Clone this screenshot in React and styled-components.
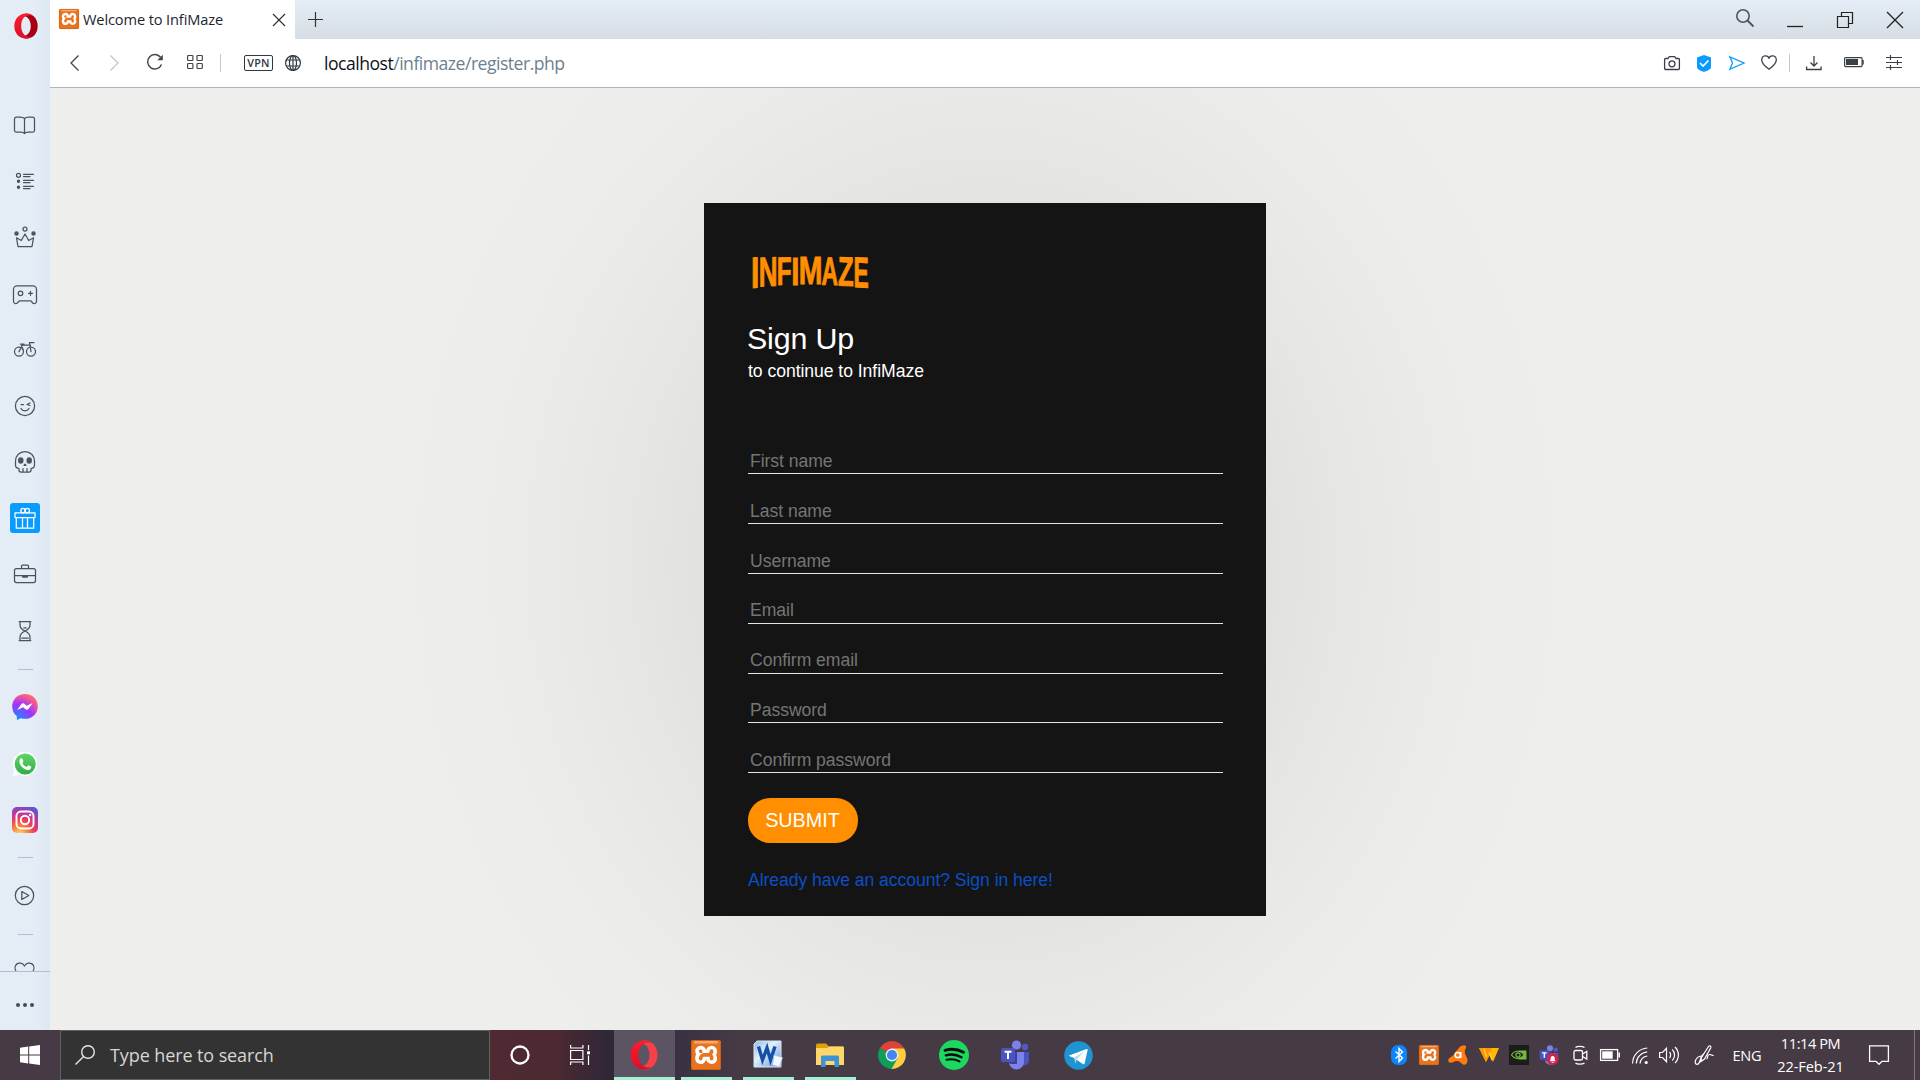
import React from "react";
import styled, { createGlobalStyle } from "styled-components";
import { SiXampp } from "react-icons/si";

const Global = createGlobalStyle`
  * { box-sizing: border-box; }
  html, body { margin: 0; padding: 0; overflow: hidden; background: #eeeeec; }
`;

const UI = `"Open Sans", "Noto Sans", sans-serif`;
const ARIAL = `"Liberation Sans", Arial, sans-serif`;

/* ---------- shell ---------- */
const Desktop = styled.div`
  width: 1920px;
  height: 1080px;
  display: flex;
  flex-direction: column;
  overflow: hidden;
  font-family: ${UI};
`;
const Browser = styled.div`
  display: flex;
  height: 1030px;
`;
const Window = styled.div`
  flex: 1;
  display: flex;
  flex-direction: column;
  min-width: 0;
`;
const Glyph = styled.svg`
  display: block;
  flex: none;
  width: ${(p) => p.$w || 20}px;
  height: ${(p) => p.$h || p.$w || 20}px;
  margin-left: ${(p) => p.$ml || 0}px;
  margin-top: ${(p) => p.$mt || 0}px;
  fill: ${(p) => p.$fill || "none"};
  stroke: ${(p) => p.$c || "none"};
  stroke-width: ${(p) => p.$sw || 1.3};
  overflow: visible;
`;

/* ---------- sidebar ---------- */
const Side = styled.aside`
  width: 50px;
  display: flex;
  flex-direction: column;
  background: linear-gradient(90deg, #e4edf5 0, #e4edf5 36px, #e0eaf3 42px, #dde8f2 50px);
`;
const SideList = styled.div`
  height: 971px;
  overflow: hidden;
  display: flex;
  flex-direction: column;
  align-items: center;
`;
const SideLogo = styled.div`
  height: 98px;
  flex: none;
  padding: 13px 0 0 1px;
`;
const SideItem = styled.div`
  flex: none;
  width: 50px;
  height: ${(p) => p.$h || 56}px;
  display: flex;
  align-items: center;
  justify-content: center;
`;
const Active = styled.div`
  width: 30px;
  height: 30px;
  border-radius: 3px;
  background: #0a9bff;
  display: flex;
`;
const SideRule = styled.div`
  flex: none;
  width: 15px;
  height: 1px;
  background: #b0bfcd;
  margin: ${(p) => p.$m};
`;
const SideFoot = styled.div`
  height: 59px;
  border-top: 1px solid #b0bfcd;
  display: flex;
  align-items: center;
  justify-content: center;
  gap: 3px;
  padding-top: 7px;
`;
const Dot = styled.i`
  width: 4px;
  height: 4px;
  border-radius: 50%;
  background: #454c56;
`;

/* ---------- tab strip and address bar ---------- */
const TabStrip = styled.div`
  height: 39px;
  display: flex;
  align-items: center;
  background: linear-gradient(#e4edf5, #d6dde5);
`;
const Tab = styled.div`
  width: 245px;
  height: 39px;
  background: #fff;
  border-radius: 2px 2px 0 0;
  display: flex;
  align-items: center;
  padding-left: 9px;
`;
const TabTitle = styled.span`
  width: 189px;
  margin-left: 4px;
  padding-bottom: 2px;
  font-size: 14.6px;
  line-height: 20px;
  letter-spacing: -0.12px;
  color: #1c2530;
  white-space: nowrap;
`;
const Spacer = styled.div`
  flex: 1;
`;
const EndPad = styled.div`
  width: ${(p) => p.$w}px;
`;
const AddressBar = styled.div`
  height: 49px;
  display: flex;
  align-items: center;
  background: #fff;
  border-bottom: 1px solid #a9b7c4;
`;
const Divider = styled.div`
  width: 1px;
  height: 18px;
  background: #c8c8c8;
  margin-left: ${(p) => p.$ml}px;
`;
const Vpn = styled.div`
  width: 29px;
  height: 16px;
  margin-left: 23px;
  border: 1px solid #2f3844;
  border-radius: 2px;
  font-size: 10.8px;
  line-height: 14px;
  text-align: center;
  letter-spacing: 0.2px;
  color: #2f3844;
  font-weight: 600;
`;
const Url = styled.div`
  margin-left: 23px;
  padding-bottom: 1px;
  font-size: 17.6px;
  line-height: 24px;
  letter-spacing: -0.5px;
  color: #6c7f8f;
  white-space: nowrap;
`;
const Host = styled.span`
  color: #0d1116;
`;

/* ---------- page ---------- */
const Page = styled.main`
  flex: 1;
  overflow: hidden;
  background:
    radial-gradient(
      ellipse 610px 695px at 935px 472px,
      rgba(0, 0, 0, 0.053) 0,
      rgba(0, 0, 0, 0.053) 46%,
      rgba(0, 0, 0, 0.036) 58%,
      rgba(0, 0, 0, 0.02) 70%,
      rgba(0, 0, 0, 0.009) 82%,
      rgba(0, 0, 0, 0.004) 91%,
      rgba(0, 0, 0, 0) 100%
    ),
    #eeeeec;
  display: flex;
  justify-content: center;
  align-items: flex-start;
  padding-top: 115px;
`;
const Card = styled.section`
  width: 562px;
  height: 713px;
  background: #141414;
  padding: 50px 43px 0 44px;
  font-family: ${ARIAL};
  color: #fff;
`;
const Logo = styled.svg`
  display: block;
  width: 124px;
  height: 38px;
  overflow: visible;
  fill: #ff8e00;
  stroke: #ff8e00;
  font-family: ${ARIAL};
  font-weight: 700;
  font-size: 40px;
`;
const Title = styled.h1`
  margin: 26px 0 0 -1px;
  font-size: 30.4px;
  font-weight: 400;
  line-height: 42px;
  letter-spacing: -0.15px;
`;
const Subtitle = styled.p`
  margin: 1px 0 0;
  font-size: 17.6px;
  line-height: 22px;
  letter-spacing: -0.05px;
`;
const Form = styled.form`
  margin-top: 62.5px;
  display: flex;
  flex-direction: column;
  align-items: flex-start;
`;
const Field = styled.input`
  width: 475px;
  height: 29.83px;
  margin: 0 0 20px;
  padding: 5px 2px 0;
  border: 0;
  border-bottom: 1px solid #e6e6e6;
  background: transparent;
  color: #fff;
  font: 17.6px ${ARIAL};
  letter-spacing: -0.05px;
  outline: none;
  &::placeholder { color: #757575; opacity: 1; }
`;
const Submit = styled.button`
  width: 110px;
  height: 45px;
  margin: 5px 0 0;
  padding: 0 1px 1px 0;
  border: 0;
  border-radius: 22px;
  background: #ff8e00;
  color: #fff;
  font: 19.8px ${ARIAL};
`;
const SignIn = styled.a`
  display: block;
  margin-top: 26px;
  font-size: 17.6px;
  line-height: 22px;
  letter-spacing: -0.06px;
  color: #0a4fc4;
`;

/* ---------- taskbar ---------- */
const Taskbar = styled.footer`
  height: 50px;
  display: flex;
  align-items: center;
  background: linear-gradient(90deg, #463a45 0, #463a45 60px, #4f2a33 490px, #4d2932 555px, #2f2736 608px, #3a3142 680px, #463a45 740px, #463a45 1920px);
`;
const Start = styled.div`
  width: 60px;
  padding-left: 20px;
`;
const Search = styled.div`
  width: 430px;
  height: 50px;
  display: flex;
  align-items: center;
  background: #333;
  border: 1px solid #606060;
  padding-left: 14px;
`;
const SearchText = styled.span`
  margin-left: 15px;
  font-size: 18px;
  line-height: 24px;
  letter-spacing: -0.1px;
  color: #d6d6d6;
  white-space: nowrap;
`;
const TaskButton = styled.div`
  width: ${(p) => p.$w}px;
  margin-left: ${(p) => p.$ml}px;
  height: 50px;
  display: flex;
  align-items: center;
  justify-content: center;
  background: ${(p) => (p.$focus ? "#5b5563" : "transparent")};
  border-bottom: 3px solid ${(p) => (p.$open ? "#a4f0d0" : "transparent")};
  padding: 3px ${(p) => (p.$w === 60 ? 0 : 1)}px 0 0;
`;
const Lang = styled.span`
  width: 28px;
  margin-left: 18.5px;
  font-size: 14.6px;
  letter-spacing: -0.3px;
  line-height: 20px;
  color: #fff;
`;
const Clock = styled.div`
  width: 88px;
  margin-left: 6px;
  text-align: center;
  font-size: 14.6px;
  line-height: 23px;
  letter-spacing: -0.45px;
  color: #fff;
  white-space: nowrap;
`;
const DateLine = styled.div`
  letter-spacing: -0.08px;
`;
const Peek = styled.div`
  width: 1px;
  height: 50px;
  margin-left: 25px;
  background: #81777f;
`;

/* ---------- drawings ---------- */
const OperaIcon = ({ id, ...r }) => (
  <Glyph viewBox="0 0 30 30" {...r}>
    <defs>
      <linearGradient id={id} x1="0" y1="0" x2="0" y2="1">
        <stop offset="0" stopColor="#ff1b2d" />
        <stop offset="1" stopColor="#d8102a" />
      </linearGradient>
    </defs>
    <path
      fill={r.$dark || "#f8404a"}
      d="M9.500 3.500C11 1.500 13.500 .5 15.500 .5 23.500 .5 28.500 7 28.500 15S23.500 29.500 15.500 29.500c-2 0-4.500-1-6-3C11.500 27 13 26.500 14.500 26 18.500 24.500 20.500 20 20.500 15S18.500 5.500 14.500 4C13 3.500 11.500 3 9.500 3.500z"
    />
    <path
      fill={`url(#${id})`}
      fillRule="evenodd"
      d="M15 .5C7 .5 1.500 7 1.500 15S7 29.500 15 29.500c3 0 5.500-1 7.500-2.700-2 .9-4 .9-6 .2C11.500 25.500 9.500 20.500 9.500 15S11.500 4.500 16.500 3c2-.7 4-.7 6 .2C20.500 1.500 18 .5 15 .5z"
    />
  </Glyph>
);

const XamppIcon = (p) => (
  <Glyph viewBox="0 0 30 30" {...p}>
    <rect width="30" height="30" rx="2.500" fill="#e8731f" />
    <rect x="2.500" y="2.500" width="25" height="25" rx="3" fill="#fff" />
    <SiXampp size={30} color="#e8731f" />
    <rect x="3" y="1" width="24" height="2.400" rx="1.200" fill="#f5a871" />
    <rect x=".5" y=".5" width="29" height="29" rx="2.300" fill="none" stroke="#c95c12" strokeWidth="0.8" />
  </Glyph>
);

const TeamsIcon = ({ badge, ...p }) => (
  <Glyph viewBox="0 0 30 30" {...p}>
    <circle cx="25" cy="7" r="3.300" fill="#5059c9" />
    <path d="M20 12h9v9a5 5 0 0 1-7 4z" fill="#4b53bc" />
    <circle cx="16.500" cy="5" r="4.600" fill="#7b83eb" />
    <path d="M9 12h15v10a7.500 7.500 0 0 1-15 0z" fill="#7b83eb" />
    <path d="M9 12h8v12h-7a9 9 0 0 1-1-3z" fill="#3b429e" />
    <rect x="1" y="8" width="14" height="14" rx="1.500" fill="#4b53bc" />
    <path d="M4.500 11.800h7M8 11.800V19" stroke="#fff" strokeWidth="2" />
    {badge && (
      <g>
        <circle cx="20.500" cy="21" r="9" fill="#d2234c" />
        <path d="M16 24.500c1.500-1 1-3 1.500-5a3 3 0 0 1 6 0c.5 2 0 4 1.500 5z M19 25.500h3v1.200h-3z" fill="#fff" />
      </g>
    )}
  </Glyph>
);

const S = (p) => (
  <Glyph viewBox="0 0 30 30" $w={30} $c="#4a525d" $sw={1.25} strokeLinejoin="round" strokeLinecap="round" {...p} />
);

const letters = [
  ["I", 5.1, 4.3, 0.068, 0.143, 30.4, 29.9],
  ["N", 12.4, 15.3, 0.067, 0.588, 29.2, 27.9],
  ["F", 30.4, 12.6, 0.067, 0.52, 27.6, 27],
  ["I", 45.3, 4.2, 0.068, 0.143, 26.9, 26.9],
  ["M", 52.6, 19.9, 0.067, 0.7, 26.6, 26.6],
  ["A", 73.9, 15.8, 0.016, 0.69, 26.9, 27.6],
  ["Z", 90.6, 14.4, 0.024, 0.56, 27.7, 28.9],
  ["E", 107.1, 12.8, 0.067, 0.56, 29, 30.4],
];

const Wordmark = () => (
  <Logo viewBox="0 0 124 38">
    {letters.map(([ch, x, w, lsb, ink, h0, h1], i) => {
      const sx = w / (ink * 40);
      const h = (h0 + h1) / 2;
      const sy = h / 27.52;
      const k = (h1 - h0) / w;
      return (
        <text
          key={i}
          strokeWidth="0.9"
          transform={`matrix(${sx} ${(k * sx) / 2} 0 ${sy} ${x - lsb * 40 * sx} ${4.6 + h - (k * w) / 4})`}
        >
          {ch}
        </text>
      );
    })}
  </Logo>
);

const fields = ["First name", "Last name", "Username", "Email", "Confirm email", "Password", "Confirm password"];

function Sidebar() {
  return (
    <Side>
      <SideList>
        <SideLogo>
          <OperaIcon id="opA" $w={26} $dark="#a70014" />
        </SideLogo>
        <SideItem>
          <S>
            <path d="M14.500 7.500C13.500 6.300 12 6 10 6H6.500A2 2 0 0 0 4.500 8v11.500a1.500 1.500 0 0 0 1.500 1.500h5c2 0 2.500.5 3.500 1.500 1-1 1.500-1.500 3.500-1.500h5a1.500 1.500 0 0 0 1.500-1.500V8A2 2 0 0 0 22.500 6H19c-2 0-3.500.3-4.500 1.500zM14.500 7.500v15" />
          </S>
        </SideItem>
        <SideItem>
          <S>
            <circle cx="8.500" cy="8.300" r="2" />
            <circle cx="8.500" cy="14.300" r="1.100" fill="#4a525d" />
            <circle cx="8.500" cy="20.300" r="1.100" fill="#4a525d" />
            <path d="M13.500 7.300h10M13.500 9.500h6.500M13.500 13.300h10M13.500 15.500h6.500M13.500 19.300h10M13.500 21.500h6.500" />
          </S>
        </SideItem>
        <SideItem>
          <S>
            <path d="M8 23.500 6.500 14.800 11.300 17.500 15 11l3.700 6.500 4.800-2.700L22 23.500z" />
            <circle cx="15" cy="6" r="2" />
            <circle cx="6.500" cy="10.500" r="1.600" fill="#4a525d" />
            <circle cx="23.500" cy="10.500" r="1.600" fill="#4a525d" />
          </S>
        </SideItem>
        <SideItem>
          <S>
            <path d="M7 6.800h16a3.500 3.500 0 0 1 3.500 3.500v12c0 2.500-2.500 2.800-3.800 1.700L21 21.800H9.300L7.300 24c-1.300 1.100-3.800.8-3.800-1.700v-12A3.500 3.500 0 0 1 7 6.800z" />
            <circle cx="10.500" cy="14.300" r="2.300" />
            <path d="M20.500 12.300v4M18.500 14.300h4" />
          </S>
        </SideItem>
        <SideItem>
          <S>
            <circle cx="9" cy="16.600" r="4.500" />
            <circle cx="21" cy="16.600" r="4.500" />
            <path d="M9 16.600 12.500 10h8M10.500 9.200h3.500M21 16.600 19.500 7.500h4.500M13 14.500l-1.500-4" />
          </S>
        </SideItem>
        <SideItem>
          <S>
            <circle cx="15" cy="15" r="9.600" />
            <path d="M11 17.500c1.500 3 6.500 3 8 0M11 13.500h2.500M20 12l-3 1.500 3 1" />
          </S>
        </SideItem>
        <SideItem>
          <S>
            <path d="M9 21.500c-2-.2-3.500-1-3.500-3.500v-4a9.500 9.500 0 0 1 19 0v4c0 2.500-1.500 3.300-3.500 3.500V23a2 2 0 0 1-2 2h-8a2 2 0 0 1-2-2zM13 25v-3.500M17 25v-3.500" />
            <ellipse cx="10.800" cy="13.500" rx="2.100" ry="2.600" fill="#4a525d" />
            <ellipse cx="19.200" cy="13.500" rx="2.100" ry="2.600" fill="#4a525d" />
            <path d="M14 18.300l1-1.200 1 1.200z" />
          </S>
        </SideItem>
        <SideItem>
          <Active>
            <S $c="#fff">
              <path d="M5 9.800h20v4.800H5zM6.300 14.600h17.400v10.600H6.300zM12.500 14.600v10.600M17.500 14.600v10.600" />
              <circle cx="13" cy="7.600" r="2.200" />
              <circle cx="17.300" cy="7.600" r="2.200" />
            </S>
          </Active>
        </SideItem>
        <SideItem>
          <S>
            <rect x="4.500" y="9.500" width="21" height="14" rx="2" />
            <path d="M11.500 9.500V7a1 1 0 0 1 1-1h5a1 1 0 0 1 1 1v2.500M4.500 16.500h21" />
            <path d="M12.700 16.800h4.600v1.200h-4.600z" fill="#4a525d" />
          </S>
        </SideItem>
        <SideItem>
          <S>
            <path d="M9.200 6.500h11.600M9.200 25.500h11.600M10 6.500V10c0 3.500 2.500 4.800 5 6-2.500 1.200-5 2.500-5 6v3.500M20 6.500V10c0 3.500-2.500 4.800-5 6 2.500 1.200 5 2.500 5 6v3.500M13.800 12.800h2.400M11.800 23.200h6.400" />
          </S>
        </SideItem>
        <SideRule $m="11px 0 9px" />
        <SideItem>
          <Glyph viewBox="0 0 26 26" $w={26}>
            <defs>
              <radialGradient id="msg" cx="0.2" cy="1" r="1.100">
                <stop offset="0" stopColor="#0a95ff" />
                <stop offset="0.55" stopColor="#a033ff" />
                <stop offset="0.9" stopColor="#ff5c87" />
                <stop offset="1" stopColor="#ff7061" />
              </radialGradient>
            </defs>
            <path fill="url(#msg)" d="M13 0C5.500 0 .2 5.300.2 12.500c0 4 1.700 7.300 4.500 9.500L5 26l3.800-1.800c1.300.4 2.700.6 4.200.6 7.500 0 12.800-5.300 12.800-12.400S20.500 0 13 0z" />
            <path fill="#fff" d="M5.200 16l4.200-6c.7-.9 1.800-1 2.600-.4l2.700 2.100L20.700 9l-4.200 6c-.7.900-1.800 1-2.600.4l-2.700-2.100z" />
          </Glyph>
        </SideItem>
        <SideItem>
          <Glyph viewBox="0 0 26 26" $w={26} $mt={2}>
            <defs>
              <linearGradient id="wa" x1="0" y1="0" x2="0" y2="1">
                <stop offset="0" stopColor="#60d66a" />
                <stop offset="1" stopColor="#2fae46" />
              </linearGradient>
            </defs>
            <path fill="#fbfdfc" d="M.5 25.500l1.700-6.600A12.300 12.300 0 1 1 7 23.700z" />
            <circle cx="13.200" cy="13" r="10.500" fill="url(#wa)" />
            <path fill="#fff" d="M9 7.200c.6-.2 1 0 1.300.6l1 2.300c.2.600-.8 1.500-.9 1.800.8 1.900 2.300 3.200 4.200 4 .6-.1 1.300-1.800 1.900-1.600l2.600 1.300c.4.300 0 1.900-.5 2.400-3.800 3.300-12.500-3.200-11-8.900.2-.8.900-1.600 1.400-1.900z" />
          </Glyph>
        </SideItem>
        <SideItem>
          <Glyph viewBox="0 0 26 26" $w={26} $mt={2}>
            <defs>
              <radialGradient id="ig" cx="0.3" cy="1.050" r="1.150">
                <stop offset="0" stopColor="#ffdc6c" />
                <stop offset="0.25" stopColor="#fb8a3c" />
                <stop offset="0.5" stopColor="#e8405f" />
                <stop offset="0.75" stopColor="#b838a5" />
                <stop offset="1" stopColor="#5a59d0" />
              </radialGradient>
            </defs>
            <rect width="26" height="26" rx="5" fill="url(#ig)" />
            <g fill="none" stroke="#fff" strokeWidth="1.900">
              <rect x="4.500" y="4.500" width="17" height="17" rx="4.500" />
              <circle cx="13" cy="13" r="4.200" />
            </g>
            <circle cx="18.100" cy="8" r="1.200" fill="#fff" />
          </Glyph>
        </SideItem>
        <SideRule $m="10px 0 10px" />
        <SideItem>
          <S>
            <circle cx="14.500" cy="14.500" r="9.200" />
            <path d="M11.800 10.500v8l7-4z" />
          </S>
        </SideItem>
        <SideRule $m="10px 0 10px" />
        <SideItem $h={50}>
          <S>
            <path d="M14.500 25.500 7 18C1 9.500 10.500 4.500 14.500 11 18.500 4.500 28 9.500 22 18z" />
          </S>
        </SideItem>
      </SideList>
      <SideFoot>
        <Dot />
        <Dot />
        <Dot />
      </SideFoot>
    </Side>
  );
}

function Chrome() {
  const dark = "#3b4048";
  return (
    <>
      <TabStrip>
        <Tab>
          <XamppIcon $w={20} $mt={-1} />
          <TabTitle>Welcome to InfiMaze</TabTitle>
          <Glyph viewBox="0 0 14 14" $w={14} $c="#333" $sw={1.2}>
            <path d="M1 1l12 12M13 1 1 13" />
          </Glyph>
        </Tab>
        <Glyph viewBox="0 0 15 15" $w={15} $ml={13} $c="#333" $sw={1.2} $mt={-1}>
          <path d="M7.500 0v15M0 7.500h15" />
        </Glyph>
        <Spacer />
        <Glyph viewBox="0 0 18 18" $w={18} $c="#50565d" $sw={1.6} $mt={-3}>
          <circle cx="7" cy="7" r="6.200" />
          <path d="M11.500 11.500 17.500 17.500" strokeWidth="2" />
        </Glyph>
        <Glyph viewBox="0 0 16 16" $w={16} $ml={33} $c="#222">
          <path d="M0 14.500h16" />
        </Glyph>
        <Glyph viewBox="0 0 16 16" $w={16} $ml={34} $c="#222" $sw={1.2}>
          <path d="M.5 4.500h11v11H.5zM4.500 4.500v-4h11v11h-4" />
        </Glyph>
        <Glyph viewBox="0 0 16 16" $w={16} $ml={34} $c="#222">
          <path d="M0 0l16 16M16 0 0 16" />
        </Glyph>
        <EndPad $w={17} />
      </TabStrip>
      <AddressBar>
        <Glyph viewBox="0 0 9 16" $w={9} $h={16} $ml={20} $c="#444">
          <path d="M8.500.5 1 8l7.500 7.500" />
        </Glyph>
        <Glyph viewBox="0 0 9 16" $w={9} $h={16} $ml={31} $c="#c4c4c4">
          <path d="M.5.5 8 8 .5 15.500" />
        </Glyph>
        <Glyph viewBox="0 0 16 16" $w={16} $ml={28} $c="#444" $sw={1.5} $mt={-2}>
          <path d="M14.500 10.500A7.200 7.200 0 1 1 13.500 3.300" />
          <path d="M15.800.8v5.500h-5.500z" fill="#444" stroke="none" />
        </Glyph>
        <Glyph viewBox="0 0 16 14" $w={16} $h={14} $ml={24} $c="#444" $sw={1.2} $mt={-2}>
          <rect x=".6" y=".5" width="5.300" height="5" rx=".8" />
          <rect x="10" y=".5" width="5.300" height="5" rx=".8" />
          <rect x=".6" y="8.500" width="5.300" height="5" rx=".8" />
          <rect x="10" y="8.500" width="5.300" height="5" rx=".8" />
        </Glyph>
        <Divider $ml={17} />
        <Vpn>VPN</Vpn>
        <Glyph viewBox="0 0 16 16" $w={16} $ml={12} $c="#2f3844" $sw={1.2}>
          <circle cx="8" cy="8" r="7.400" />
          <ellipse cx="8" cy="8" rx="3.500" ry="7.400" />
          <path d="M8 .5v15M1.300 5h13.400M1.300 11h13.400" />
        </Glyph>
        <Url>
          <Host>localhost</Host>/infimaze/register.php
        </Url>
        <Spacer />
        <Glyph viewBox="0 0 16 14" $w={16} $h={14} $c={dark} strokeLinejoin="round">
          <path d="M1.500 2.500H4L5.300.7h5.400L12 2.500h2.500a.9.900 0 0 1 .9.900v9.200a.9.900 0 0 1-.9.900h-13a.9.900 0 0 1-.9-.9V3.400a.9.900 0 0 1 .9-.9z" />
          <circle cx="8" cy="7.800" r="3" />
        </Glyph>
        <Glyph viewBox="0 0 14 17" $w={14} $h={17} $ml={17}>
          <path d="M7 0l7 2.500V12c0 2.500-4.500 4-7 5-2.500-1-7-2.500-7-5V2.500z" fill="#0a9bff" />
          <path d="M3 8l3 3 5.500-5.500" stroke="#fff" strokeWidth="1.700" />
        </Glyph>
        <Glyph viewBox="0 0 16 14" $w={16} $h={14} $ml={18} $c="#0a9bff">
          <path d="M.8.800 15 7 .8 13.300 3.500 7z" />
        </Glyph>
        <Glyph viewBox="0 0 16 15" $w={16} $h={15} $ml={16} $c={dark} $mt={-1}>
          <path d="M8 14.300C5 12 .7 9 .7 5 .7 0 7 -.5 8 3.500 9-.5 15.300 0 15.300 5c0 4-4.300 7-7.300 9.300z" />
        </Glyph>
        <Divider $ml={12} />
        <Glyph viewBox="0 0 16 14" $w={16} $h={14} $ml={16} $c={dark} $sw={1.3} $mt={-1}>
          <path d="M8 0v9.500M4.500 6.500 8 10l3.500-3.500M.6 10.500v3h14.500v-3" />
        </Glyph>
        <Glyph viewBox="0 0 20 10" $w={20} $h={10} $ml={22} $c={dark} $sw={1.2} $mt={-2}>
          <rect x=".6" y=".6" width="17.500" height="9" rx="1" />
          <path d="M2 2h12v6H2z" fill={dark} stroke="none" />
          <path d="M19 3v4.500" strokeWidth="1.500" />
        </Glyph>
        <Glyph viewBox="0 0 16 15" $w={16} $h={15} $ml={22} $c={dark} $sw={1.2} $mt={-2}>
          <path d="M0 2.500h16M0 7.500h16M0 12.500h16M4.500 0v5M11.500 5v5M4.500 10v5" />
        </Glyph>
        <EndPad $w={18} />
      </AddressBar>
    </>
  );
}

function SystemBar() {
  return (
    <Taskbar>
      <Start>
        <Glyph viewBox="0 0 20 20" $w={20} $fill="#fff">
          <path d="M0 2.800 8.200 1.600v8H0zM9.200 1.400 20 0v9.600H9.200zM0 10.500h8.200v8L0 17.300zM9.200 10.500H20V20L9.200 18.600z" />
        </Glyph>
      </Start>
      <Search>
        <Glyph viewBox="0 0 20 20" $w={20} $c="#e6e6e6" $sw={1.4}>
          <circle cx="13" cy="7" r="6.300" />
          <path d="M8.600 11.500.5 19.600" />
        </Glyph>
        <SearchText>Type here to search</SearchText>
      </Search>
      <TaskButton $w={60} $ml={0}>
        <Glyph viewBox="0 0 20 20" $w={20} $c="#fff" $sw={2.3}>
          <circle cx="10" cy="10" r="8.500" />
        </Glyph>
      </TaskButton>
      <TaskButton $w={60} $ml={0}>
        <Glyph viewBox="0 0 20 20" $w={20} $c="#fff" $sw={1.2}>
          <path d="M.6 5.500h12.300v9H.6zM.6 0v3h12.300V0M.6 20v-3h12.300v3M18.500 0v5M18.500 10.500V20" />
          <path d="M17 6.300h3v3h-3z" fill="#fff" stroke="none" />
        </Glyph>
      </TaskButton>
      <TaskButton $w={61} $ml={4} $focus $open>
        <OperaIcon id="opB" $w={30} />
      </TaskButton>
      <TaskButton $w={51} $ml={6} $open>
        <XamppIcon $w={30} />
      </TaskButton>
      <TaskButton $w={51} $ml={11} $open>
        <Glyph viewBox="0 0 30 28" $w={30} $h={28} $mt={-2}>
          <defs>
            <linearGradient id="wd" x1="0" y1="0" x2="1" y2="1">
              <stop offset="0" stopColor="#8fb7e6" />
              <stop offset="0.4" stopColor="#e3effb" />
              <stop offset="1" stopColor="#5f94d6" />
            </linearGradient>
          </defs>
          <path d="M4 1h24v26H1V4z" fill="url(#wd)" stroke="#d9e8f8" strokeWidth="1" />
          <path d="M5.500 6.500 9.500 20 14 8l3.500 12 4.500-13.500" fill="none" stroke="#1550a8" strokeWidth="3.400" />
          <path d="M21 15l8.500 2.500-3 9.500-7-2z" fill="#f2f8ff" stroke="#9bb9df" strokeWidth=".6" />
        </Glyph>
      </TaskButton>
      <TaskButton $w={51} $ml={11} $open>
        <Glyph viewBox="0 0 28 24" $w={28} $h={24} $mt={-1}>
          <path d="M0 2a1.500 1.500 0 0 1 1.500-1.500H10L13 3.500H27V8H0z" fill="#dda009" />
          <path d="M0 5h11l2.500-1.500H26.500A1.200 1.200 0 0 1 28 5v17H0z" fill="#ffd667" />
          <path d="M5 24V14a1.500 1.500 0 0 1 1.500-1.500h15A1.500 1.500 0 0 1 23 14v10h-4.500v-6h-9v6z" fill="#3e92d8" />
        </Glyph>
      </TaskButton>
      <TaskButton $w={51} $ml={11}>
        <Glyph viewBox="0 0 28 28" $w={28}>
          <path d="M14 14 1.900 7A14 14 0 0 1 26.100 7z" fill="#db4437" />
          <path d="M14 14V28A14 14 0 0 1 1.900 7z" fill="#0f9d58" />
          <path d="M8.400 17.300 14 28l6-10.500z" fill="#0f9d58" />
          <path d="M19.600 17.300 13.500 28A14 14 0 0 0 26.300 7.500H14z" fill="#ffcd40" />
          <circle cx="14" cy="14" r="6.400" fill="#f1f1f1" />
          <circle cx="14" cy="14" r="5.100" fill="#4285f4" />
        </Glyph>
      </TaskButton>
      <TaskButton $w={51} $ml={11}>
        <Glyph viewBox="0 0 30 30" $w={30} $c="#0c0c0c" strokeLinecap="round">
          <circle cx="15" cy="15" r="15" fill="#1ed760" stroke="none" />
          <path d="M6 10.300c6-1.700 13-1 18.500 2" strokeWidth="2.900" />
          <path d="M6.800 15.300c5-1.400 11-.8 15.700 1.900" strokeWidth="2.400" />
          <path d="M7.500 19.800c4.500-1.100 9-.6 13 1.600" strokeWidth="2" />
        </Glyph>
      </TaskButton>
      <TaskButton $w={51} $ml={10}>
        <TeamsIcon $w={30} />
      </TaskButton>
      <TaskButton $w={51} $ml={12}>
        <Glyph viewBox="0 0 29 29" $w={29}>
          <circle cx="14.500" cy="14.500" r="14.300" fill="#1f94d2" />
          <path d="M4.500 14.800 22.500 8c1-.3 1.300.4 1.100 1.200l-3 13.200c-.3 1-1 1.200-1.800.700L10 16.900z" fill="#fff" />
          <path d="M10 16.800 20 10.500l-7.500 8.200-.8 4z" fill="#c0d9ea" />
        </Glyph>
      </TaskButton>
      <Spacer />
      <Glyph viewBox="0 0 16 20" $w={16} $h={20}>
        <rect width="16" height="20" rx="7" fill="#0a84ff" />
        <path d="M4.500 6.500 11.500 13 8 16.500v-13L11.500 7l-7 6.500" stroke="#fff" strokeWidth="1.400" />
      </Glyph>
      <XamppIcon $w={20} $ml={12} />
      <Glyph viewBox="0 0 20 20" $w={20} $ml={9}>
        <path d="M10.500 3.500C12.500 .5 17 -.5 18 1.200c.8 1.600-1.300 3-1.300 5.300 0 3.500 2.300 5 2.800 8.500.3 3.300-2.300 5.500-4.500 4.500-2.300-1-2.800-3.200-5.500-3.500-3-.3-4.500 2-7 1.800-2.500-.3-3-3.300-1-4.800C3.500 11.500 5 11 6.500 8.500 8 6 9 5.500 10.500 3.500z" fill="#ff7a0f" />
        <circle cx="9.800" cy="10" r="2.600" stroke="#fff" strokeWidth="1.500" />
        <path d="M12.800 7v6" stroke="#fff" strokeWidth="1.500" />
      </Glyph>
      <Glyph viewBox="0 0 20 16" $w={20} $h={16} $ml={11}>
        <path d="M0 1h20l-6 14-3.500-7L7 15z" fill="#ffb800" />
        <path d="M0 1h13l-2.500 7L7 15z" fill="#ff9500" />
        <path d="M5 2 7.500 10M10 5l3 8" stroke="#ffd84d" strokeWidth="1.200" />
      </Glyph>
      <Glyph viewBox="0 0 20 20" $w={20} $ml={10}>
        <rect width="20" height="20" fill="#1c1c1c" />
        <path d="M9.500 5.500H17.500v9H9.500z" fill="#76b83f" />
        <path d="M2.500 10c3-5 9-5 12.500 0-3.500 4.500-9.500 4.500-12.500 0z" stroke="#76b83f" strokeWidth="1.200" fill="#1c1c1c" />
        <circle cx="9" cy="10" r="2.100" stroke="#76b83f" strokeWidth="1.200" />
      </Glyph>
      <TeamsIcon badge $w={20} $ml={10} />
      <Glyph viewBox="0 0 15 20" $w={15} $h={20} $ml={14} $c="#fff">
        <rect x="1" y="5.500" width="8.500" height="9.500" rx="1.500" />
        <path d="M9.500 9l4.300-2.500v7.500L9.500 11.500M2.500 2.500c1.500-1.500 7-1.500 9 0M2.500 18c1.500 1.500 7 1.500 9 0" />
      </Glyph>
      <Glyph viewBox="0 0 20 12" $w={20} $h={12} $ml={12} $c="#fff">
        <rect x=".6" y=".6" width="17" height="10.800" />
        <path d="M2.200 2.300h10.500v7.400H2.200z" fill="#fff" stroke="none" />
        <path d="M19.200 3.500v5" strokeWidth="1.500" />
      </Glyph>
      <Glyph viewBox="0 0 16 17" $w={16} $h={17} $ml={12} $c="#fff" $sw={1.2}>
        <path d="M.6 16.500A15.500 15.500 0 0 1 15.300 1M4.300 16.500A11.500 11.500 0 0 1 15.300 5M8.100 16.500A7.800 7.800 0 0 1 15.300 9" />
        <circle cx="14.200" cy="15.500" r="1.600" fill="#fff" stroke="none" />
      </Glyph>
      <Glyph viewBox="0 0 20 18" $w={20} $h={18} $ml={11} $c="#fff" $sw={1.2}>
        <path d="M.6 6.500H3.500L7.500 2.300v13.400L3.500 11.500H.6zM10.500 6c1.500 1.500 1.500 4.500 0 6M13.300 3.500c3 3 3 8 0 11M16 1c4.500 4.500 4.500 11.500 0 16" />
      </Glyph>
      <Glyph viewBox="0 0 20 20" $w={20} $ml={15} $c="#fff" $sw={1.2}>
        <path d="M7.500 12.500 14.500 1.500c1-1.500 3-.3 2.300 1.200L10.500 14l-3.500 2.500zM7.500 11C1 12-.5 19 3 19.300 7 19.500 5 12 10 8.500M12.500 14C15 13 12 10 15.500 9.500c2.500-.3 3 2 4 .5" />
      </Glyph>
      <Lang>ENG</Lang>
      <Clock>
        11:14 PM
        <DateLine>22-Feb-21</DateLine>
      </Clock>
      <Glyph viewBox="0 0 20 20" $w={20} $ml={14.5} $c="#fff" $sw={1.3}>
        <path d="M.6.800h18.800v15.500h-6.400L10 19.300 7 16.300H.6z" />
      </Glyph>
      <Peek />
      <EndPad $w={5} />
    </Taskbar>
  );
}

export default function App() {
  return (
    <>
      <Global />
      <Desktop>
        <Browser>
          <Sidebar />
          <Window>
            <Chrome />
            <Page>
              <Card>
                <Wordmark />
                <Title>Sign Up</Title>
                <Subtitle>to continue to InfiMaze</Subtitle>
                <Form>
                  {fields.map((f) => (
                    <Field key={f} placeholder={f} />
                  ))}
                  <Submit type="button">SUBMIT</Submit>
                </Form>
                <SignIn>Already have an account? Sign in here!</SignIn>
              </Card>
            </Page>
          </Window>
        </Browser>
        <SystemBar />
      </Desktop>
    </>
  );
}
